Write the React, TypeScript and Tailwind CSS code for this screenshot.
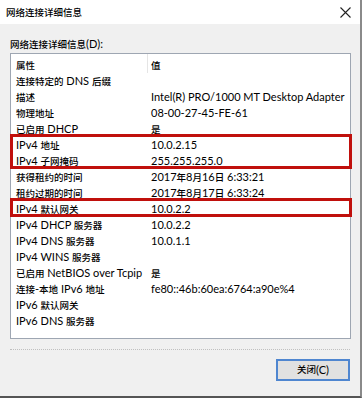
import React from 'react'

type Row = { name: string; value: string }

const rows: Row[] = [
  { name: '连接特定的 DNS 后缀', value: '' },
  { name: '描述', value: 'Intel(R) PRO/1000 MT Desktop Adapter' },
  { name: '物理地址', value: '08-00-27-45-FE-61' },
  { name: '已启用 DHCP', value: '是' },
  { name: 'IPv4 地址', value: '10.0.2.15' },
  { name: 'IPv4 子网掩码', value: '255.255.255.0' },
  { name: '获得租约的时间', value: '2017年8月16日 6:33:21' },
  { name: '租约过期的时间', value: '2017年8月17日 6:33:24' },
  { name: 'IPv4 默认网关', value: '10.0.2.2' },
  { name: 'IPv4 DHCP 服务器', value: '10.0.2.2' },
  { name: 'IPv4 DNS 服务器', value: '10.0.1.1' },
  { name: 'IPv4 WINS 服务器', value: '' },
  { name: '已启用 NetBIOS over Tcpip', value: '是' },
  { name: '连接-本地 IPv6 地址', value: 'fe80::46b:60ea:6764:a90e%4' },
  { name: 'IPv6 默认网关', value: '' },
  { name: 'IPv6 DNS 服务器', value: '' },
]

// CJK glyphs in the dialog font run a bit smaller than the latin ones
function T({ children }: { children: string }) {
  const parts = children.split(/([\u3000-\u9fff\uff00-\uffef]+)/)
  return (
    <>
      {parts.map((p, i) =>
        i % 2 === 1 ? (
          <span key={i} className="text-[9.5px] font-medium">
            {p}
          </span>
        ) : (
          p
        )
      )}
    </>
  )
}

function DetailRow({ row }: { row: Row }) {
  return (
    <div className="flex h-[16px] items-center whitespace-nowrap">
      <div className="w-[136px] shrink-0 pl-[5px]">
        <T>{row.name}</T>
      </div>
      <div className="pl-[4px]">
        <T>{row.value}</T>
      </div>
    </div>
  )
}

// red annotation frame drawn over a group of rows
function Marked({ items }: { items: Row[] }) {
  return (
    <div className="relative">
      {items.map((r) => (
        <DetailRow key={r.name} row={r} />
      ))}
      <span className="pointer-events-none absolute -top-[3px] bottom-0 -left-[1px] -right-[2px] border-[3px] border-[#c0100c]" />
    </div>
  )
}

export default function App() {
  return (
    <div
      className="flex h-[398px] w-[362px] flex-col border-r-2 border-b-2 border-r-[#8a8a8a] border-b-[#555] bg-[#f0f0f0] text-[11px] leading-[16px] text-black"
      style={{ fontFamily: 'Lato, "Noto Sans CJK SC", sans-serif' }}
    >
      {/* title bar */}
      <div className="flex h-[24px] shrink-0 items-center justify-between bg-white pl-[6px] pr-[9px]">
        <span>
          <T>网络连接详细信息</T>
        </span>
        <svg width="11" height="11" viewBox="0 0 11 11" className="text-[#222]">
          <path d="M0.5 0.5 L10.5 10.5 M10.5 0.5 L0.5 10.5" stroke="currentColor" strokeWidth="1.1" />
        </svg>
      </div>

      <div className="flex flex-1 flex-col px-[10px]">
        <div className="mt-[12px] h-[16px]">
          <T>网络连接详细信息(D):</T>
        </div>

        {/* list */}
        <div className="mt-[1px] h-[286px] w-[341px] border border-[#9ea6b2] bg-white">
          <div className="flex h-[19px] items-center">
            <div className="w-[136px] shrink-0 pl-[5px] pt-[3px]">
              <T>属性</T>
            </div>
            <div className="h-full border-l border-[#e5e5e5] pl-[3px] pt-[3px]">
              <T>值</T>
            </div>
          </div>
          {rows.slice(0, 4).map((r) => (
            <DetailRow key={r.name} row={r} />
          ))}
          <Marked items={rows.slice(4, 6)} />
          {rows.slice(6, 8).map((r) => (
            <DetailRow key={r.name} row={r} />
          ))}
          <Marked items={rows.slice(8, 9)} />
          {rows.slice(9).map((r) => (
            <DetailRow key={r.name} row={r} />
          ))}
        </div>

        <div className="mt-[10px] w-[340px] border-t border-dotted border-[#bfbfbf]" />

        <div className="mt-[9px] flex justify-end">
          <button className="flex h-[22px] w-[74px] items-center justify-center border-2 border-[#4f86d0] bg-[#e1e1e1] text-[11px] text-black">
            <T>关闭(C)</T>
          </button>
        </div>
      </div>
    </div>
  )
}
